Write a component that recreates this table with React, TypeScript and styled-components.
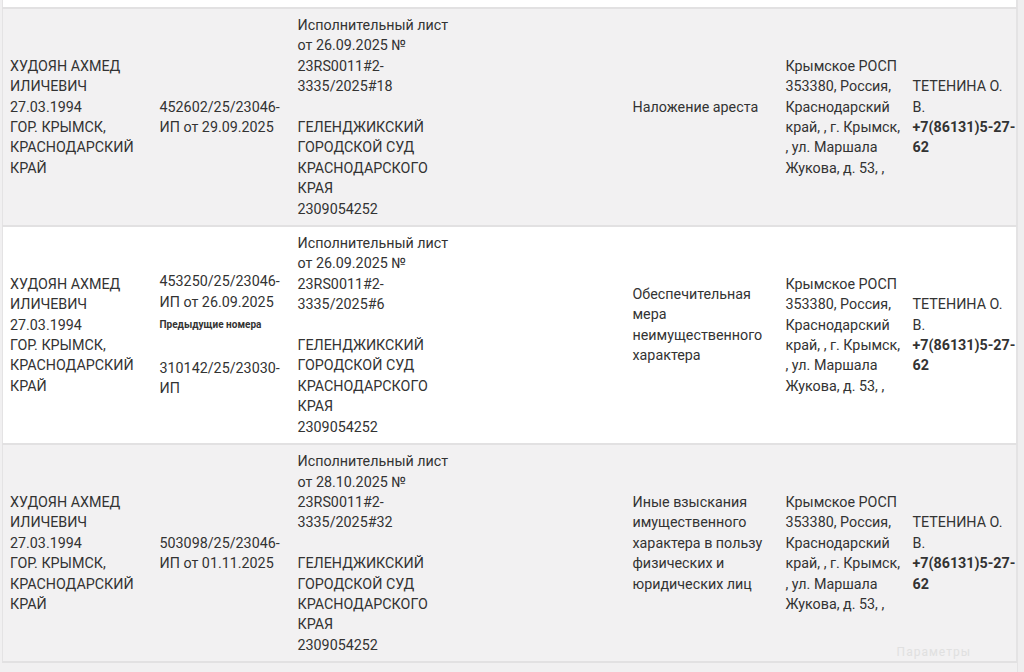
import React from 'react';
import styled, { createGlobalStyle } from 'styled-components';

type Proceeding = {
  debtor: string[];
  number: string[];
  previous?: string[];
  document: string[];
  court: string[];
  subject: string[];
  department: string[];
  officer: string[];
  phone: string[];
};

const department = [
  'Крымское РОСП',
  '353380, Россия,',
  'Краснодарский',
  'край, , г. Крымск,',
  ', ул. Маршала',
  'Жукова, д. 53, ,',
];

const debtor = [
  'ХУДОЯН АХМЕД',
  'ИЛИЧЕВИЧ',
  '27.03.1994',
  'ГОР. КРЫМСК,',
  'КРАСНОДАРСКИЙ',
  'КРАЙ',
];

const court = ['ГЕЛЕНДЖИКСКИЙ', 'ГОРОДСКОЙ СУД', 'КРАСНОДАРСКОГО', 'КРАЯ', '2309054252'];

const officer = ['ТЕТЕНИНА О.', 'В.'];
const phone = ['+7(86131)5-27-', '62'];

const rows: Proceeding[] = [
  {
    debtor,
    number: ['452602/25/23046-', 'ИП от 29.09.2025'],
    document: ['Исполнительный лист', 'от 26.09.2025 №', '23RS0011#2-', '3335/2025#18'],
    court,
    subject: ['Наложение ареста'],
    department,
    officer,
    phone,
  },
  {
    debtor,
    number: ['453250/25/23046-', 'ИП от 26.09.2025'],
    previous: ['310142/25/23030-', 'ИП'],
    document: ['Исполнительный лист', 'от 26.09.2025 №', '23RS0011#2-', '3335/2025#6'],
    court,
    subject: ['Обеспечительная', 'мера', 'неимущественного', 'характера'],
    department,
    officer,
    phone,
  },
  {
    debtor,
    number: ['503098/25/23046-', 'ИП от 01.11.2025'],
    document: ['Исполнительный лист', 'от 28.10.2025 №', '23RS0011#2-', '3335/2025#32'],
    court,
    subject: [
      'Иные взыскания',
      'имущественного',
      'характера в пользу',
      'физических и',
      'юридических лиц',
    ],
    department,
    officer,
    phone,
  },
];

function Lines({ items }: { items: string[] }) {
  return (
    <>
      {items.map((line, i) => (
        <Line key={i}>{line}</Line>
      ))}
    </>
  );
}

export default function App() {
  return (
    <>
      <GlobalStyle />
      <Page>
        <Frame>
          <Table>
            <colgroup>
              <col style={{ width: 150 }} />
              <col style={{ width: 138 }} />
              <col style={{ width: 166 }} />
              <col style={{ width: 169 }} />
              <col style={{ width: 153 }} />
              <col style={{ width: 127 }} />
              <col />
            </colgroup>
            <tbody>
              <TailRow>
                <td colSpan={7} />
              </TailRow>
              {rows.map((row, i) => (
                <Row key={i} $striped={i % 2 === 0}>
                  <Cell>
                    <Lines items={row.debtor} />
                  </Cell>
                  <Cell>
                    <Lines items={row.number} />
                    {row.previous && (
                      <>
                        <PrevLabel>Предыдущие номера</PrevLabel>
                        <PrevList>
                          <Lines items={row.previous} />
                        </PrevList>
                      </>
                    )}
                  </Cell>
                  <Cell>
                    <Lines items={row.document} />
                    <Gap />
                    <Lines items={row.court} />
                  </Cell>
                  <Cell />
                  <Cell>
                    <Lines items={row.subject} />
                    <Gap />
                  </Cell>
                  <Cell>
                    <Lines items={row.department} />
                  </Cell>
                  <Cell>
                    <Lines items={row.officer} />
                    <Phone>
                      <Lines items={row.phone} />
                    </Phone>
                  </Cell>
                </Row>
              ))}
            </tbody>
          </Table>
          <Ghost>Параметры</Ghost>
        </Frame>
        <Scrollbar />
      </Page>
    </>
  );
}

const GlobalStyle = createGlobalStyle`
  html, body {
    margin: 0;
    padding: 0;
    background: #f1f0f1;
  }
  body {
    font-family: Roboto, "Noto Sans", Arial, sans-serif;
  }
`;

const Page = styled.div`
  display: flex;
  width: 1024px;
  height: 672px;
  overflow: hidden;
  background: #f1f0f1;
`;

const Frame = styled.div`
  position: relative;
  flex: 1;
  padding-left: 2px;
  align-self: flex-start;
`;

const Table = styled.table`
  width: 100%;
  table-layout: fixed;
  border-collapse: collapse;
  border-left: 1px solid #e4e3e4;
  border-right: 1px solid #e4e3e4;
  color: #333;
  font-size: 14.3px;
  line-height: 20.4px;
`;

const TailRow = styled.tr`
  height: 8px;
  background: #fff;
  border-bottom: 2px solid #e2e1e2;

  td {
    padding: 0;
  }
`;

const Row = styled.tr<{ $striped: boolean }>`
  background: ${(p) => (p.$striped ? '#f2f1f2' : '#ffffff')};
  border-bottom: 2px solid #e2e1e2;
`;

const Cell = styled.td`
  padding: 6px 7px;
  vertical-align: middle;
  overflow: hidden;
`;

const Line = styled.div`
  white-space: nowrap;
`;

const Gap = styled.div`
  height: 20.4px;
`;

const PrevLabel = styled.div`
  margin-top: 6px;
  font-size: 10px;
  line-height: 14px;
  font-weight: 700;
  color: #333;
`;

const PrevList = styled.div`
  margin-top: 26px;
`;

const Phone = styled.div`
  font-weight: 700;
`;

const Ghost = styled.div`
  position: absolute;
  right: 46px;
  bottom: 4px;
  font-size: 12px;
  color: #e0e0e0;
  letter-spacing: 1px;
`;

const Scrollbar = styled.div`
  width: 6px;
  flex-shrink: 0;
  background: #efeeef;
  border-left: 1px solid #e4e3e4;
`;
